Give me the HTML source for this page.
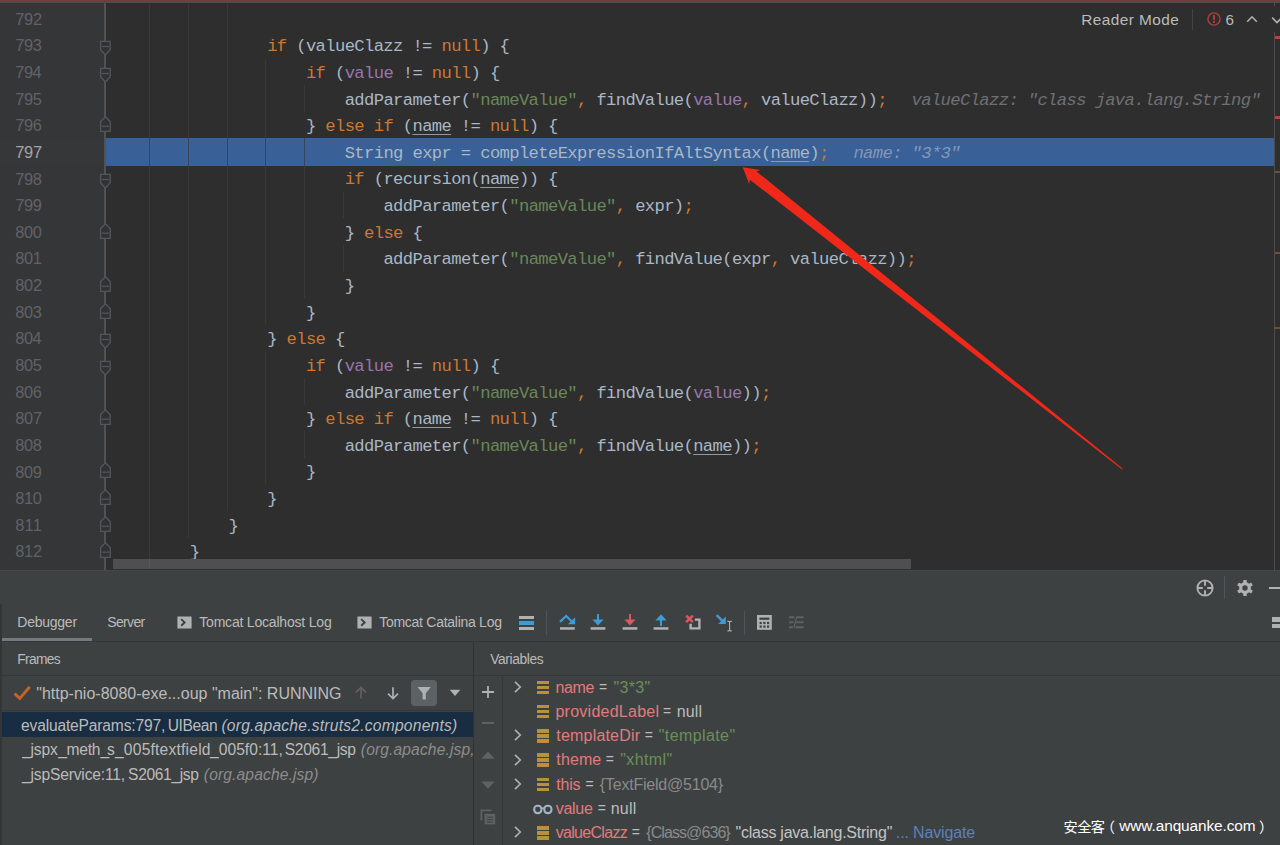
<!DOCTYPE html>
<html lang="en"><head><meta charset="utf-8"><title>UIBean.java - Debugger</title>
<style>
html,body{margin:0;padding:0;}
body{width:1280px;height:845px;overflow:hidden;position:relative;background:#2e2e2e;font-family:"Liberation Sans","Noto Sans CJK SC",sans-serif;}
#ed{position:absolute;left:0;top:0;width:1280px;height:570px;overflow:hidden;background:#2e2e2e;}
#gut{position:absolute;left:0;top:0;width:105px;height:570px;background:#353638;}
.ln,.cl,.hn{position:absolute;font-family:"Liberation Mono","DejaVu Sans Mono",monospace;line-height:40px;height:40px;white-space:pre;}
.cl,.hn{font-size:17.2px;letter-spacing:-0.6342px;}
.cl{color:#a9b7c6;}
.k{color:#cc7832;}
.s{color:#6a8759;}
.f{color:#9876aa;}
.u{text-decoration:underline;text-decoration-thickness:1px;text-underline-offset:2.6px;text-decoration-color:#8f9aa7;}
.hn{color:#6e7073;font-style:italic;}
.g{position:absolute;width:1px;background:#393939;}
.ab{position:absolute;}
#pn{position:absolute;left:0;top:570px;width:1280px;height:275px;background:#3e4142;}
.tx{position:absolute;white-space:pre;line-height:40px;height:40px;color:#bbbbbb;font-family:"Liberation Sans","Noto Sans CJK SC",sans-serif;}
</style></head><body>
<div id="ed">
<div id="gut"></div>
<div class="ab" style="left:0.00px;top:138.00px;width:105.00px;height:27.50px;background:#363739;"></div>
<div class="ab" style="left:105.00px;top:138.00px;width:1169.60px;height:27.50px;background:#396097;"></div>
<div class="ab" style="left:104.20px;top:3.00px;width:1.50px;height:567.00px;background:#505355;"></div>
<div class="g" style="left:149px;top:3.00px;height:561.62px"></div>
<div class="g" style="left:188px;top:3.00px;height:534.99px"></div>
<div class="g" style="left:227px;top:3.00px;height:508.35px"></div>
<div class="g" style="left:265px;top:58.64px;height:266.30px"></div>
<div class="g" style="left:265px;top:351.57px;height:133.15px"></div>
<div class="g" style="left:304px;top:85.28px;height:26.63px"></div>
<div class="g" style="left:304px;top:138.53px;height:159.78px"></div>
<div class="g" style="left:304px;top:378.20px;height:26.63px"></div>
<div class="g" style="left:304px;top:431.46px;height:26.63px"></div>
<div class="g" style="left:343px;top:191.79px;height:26.63px"></div>
<div class="g" style="left:343px;top:245.06px;height:26.63px"></div>
<div class="ab" style="left:148.80px;top:138.00px;width:1.40px;height:27.50px;background:#35455f;"></div>
<div class="ab" style="left:187.80px;top:138.00px;width:1.40px;height:27.50px;background:#35455f;"></div>
<div class="ab" style="left:226.80px;top:138.00px;width:1.40px;height:27.50px;background:#35455f;"></div>
<div class="ab" style="left:264.80px;top:138.00px;width:1.40px;height:27.50px;background:#35455f;"></div>
<div class="ab" style="left:303.80px;top:138.00px;width:1.40px;height:27.50px;background:#35455f;"></div>
<svg class="ab" style="left:98.00px;top:39.33px" width="14" height="18" viewBox="0 0 14 18"><path d="M2.6 2.4H12.2V10.8L7.4 16L2.6 10.8Z" fill="#313233" stroke="#54575a" stroke-width="1.3" stroke-linejoin="miter"/><path d="M3.8 7.5H11" stroke="#54575a" stroke-width="1.2"/></svg>
<svg class="ab" style="left:98.00px;top:65.96px" width="14" height="18" viewBox="0 0 14 18"><path d="M2.6 2.4H12.2V10.8L7.4 16L2.6 10.8Z" fill="#313233" stroke="#54575a" stroke-width="1.3" stroke-linejoin="miter"/><path d="M3.8 7.5H11" stroke="#54575a" stroke-width="1.2"/></svg>
<svg class="ab" style="left:98.00px;top:115.22px" width="14" height="18" viewBox="0 0 14 18"><path d="M7.4 1.8L12.2 6.5V16.3H2.6V6.5Z" fill="#313233" stroke="#54575a" stroke-width="1.3" stroke-linejoin="miter"/><path d="M3.8 11.2H11" stroke="#54575a" stroke-width="1.2"/></svg>
<svg class="ab" style="left:98.00px;top:172.48px" width="14" height="18" viewBox="0 0 14 18"><path d="M2.6 2.4H12.2V10.8L7.4 16L2.6 10.8Z" fill="#313233" stroke="#54575a" stroke-width="1.3" stroke-linejoin="miter"/><path d="M3.8 7.5H11" stroke="#54575a" stroke-width="1.2"/></svg>
<svg class="ab" style="left:98.00px;top:221.74px" width="14" height="18" viewBox="0 0 14 18"><path d="M7.4 1.8L12.2 6.5V16.3H2.6V6.5Z" fill="#313233" stroke="#54575a" stroke-width="1.3" stroke-linejoin="miter"/><path d="M3.8 11.2H11" stroke="#54575a" stroke-width="1.2"/></svg>
<svg class="ab" style="left:98.00px;top:275.00px" width="14" height="18" viewBox="0 0 14 18"><path d="M7.4 1.8L12.2 6.5V16.3H2.6V6.5Z" fill="#313233" stroke="#54575a" stroke-width="1.3" stroke-linejoin="miter"/><path d="M3.8 11.2H11" stroke="#54575a" stroke-width="1.2"/></svg>
<svg class="ab" style="left:98.00px;top:301.63px" width="14" height="18" viewBox="0 0 14 18"><path d="M7.4 1.8L12.2 6.5V16.3H2.6V6.5Z" fill="#313233" stroke="#54575a" stroke-width="1.3" stroke-linejoin="miter"/><path d="M3.8 11.2H11" stroke="#54575a" stroke-width="1.2"/></svg>
<svg class="ab" style="left:98.00px;top:332.26px" width="14" height="18" viewBox="0 0 14 18"><path d="M2.6 2.4H12.2V10.8L7.4 16L2.6 10.8Z" fill="#313233" stroke="#54575a" stroke-width="1.3" stroke-linejoin="miter"/><path d="M3.8 7.5H11" stroke="#54575a" stroke-width="1.2"/></svg>
<svg class="ab" style="left:98.00px;top:358.89px" width="14" height="18" viewBox="0 0 14 18"><path d="M2.6 2.4H12.2V10.8L7.4 16L2.6 10.8Z" fill="#313233" stroke="#54575a" stroke-width="1.3" stroke-linejoin="miter"/><path d="M3.8 7.5H11" stroke="#54575a" stroke-width="1.2"/></svg>
<svg class="ab" style="left:98.00px;top:408.15px" width="14" height="18" viewBox="0 0 14 18"><path d="M7.4 1.8L12.2 6.5V16.3H2.6V6.5Z" fill="#313233" stroke="#54575a" stroke-width="1.3" stroke-linejoin="miter"/><path d="M3.8 11.2H11" stroke="#54575a" stroke-width="1.2"/></svg>
<svg class="ab" style="left:98.00px;top:461.41px" width="14" height="18" viewBox="0 0 14 18"><path d="M7.4 1.8L12.2 6.5V16.3H2.6V6.5Z" fill="#313233" stroke="#54575a" stroke-width="1.3" stroke-linejoin="miter"/><path d="M3.8 11.2H11" stroke="#54575a" stroke-width="1.2"/></svg>
<svg class="ab" style="left:98.00px;top:488.04px" width="14" height="18" viewBox="0 0 14 18"><path d="M7.4 1.8L12.2 6.5V16.3H2.6V6.5Z" fill="#313233" stroke="#54575a" stroke-width="1.3" stroke-linejoin="miter"/><path d="M3.8 11.2H11" stroke="#54575a" stroke-width="1.2"/></svg>
<svg class="ab" style="left:98.00px;top:514.67px" width="14" height="18" viewBox="0 0 14 18"><path d="M7.4 1.8L12.2 6.5V16.3H2.6V6.5Z" fill="#313233" stroke="#54575a" stroke-width="1.3" stroke-linejoin="miter"/><path d="M3.8 11.2H11" stroke="#54575a" stroke-width="1.2"/></svg>
<svg class="ab" style="left:98.00px;top:541.30px" width="14" height="18" viewBox="0 0 14 18"><path d="M7.4 1.8L12.2 6.5V16.3H2.6V6.5Z" fill="#313233" stroke="#54575a" stroke-width="1.3" stroke-linejoin="miter"/><path d="M3.8 11.2H11" stroke="#54575a" stroke-width="1.2"/></svg>
<div class="tx" style="left:15.15px;top:-1.00px;font-size:16.4px;letter-spacing:-0.213px;color:#606366;">792</div>
<div class="tx" style="left:15.15px;top:25.00px;font-size:16.4px;letter-spacing:-0.319px;color:#606366;">793</div>
<div class="cl" style="left:267.20px;top:27.00px"><span class="k">if</span> (valueClazz != <span class="k">null</span>) {</div>
<div class="tx" style="left:15.15px;top:52.00px;font-size:16.4px;letter-spacing:-0.377px;color:#606366;">794</div>
<div class="cl" style="left:305.95px;top:54.00px"><span class="k">if</span> (<span class="f">value</span> != <span class="k">null</span>) {</div>
<div class="tx" style="left:15.15px;top:79.00px;font-size:16.4px;letter-spacing:-0.280px;color:#606366;">795</div>
<div class="cl" style="left:344.70px;top:81.00px">addParameter(<span class="s">"nameValue"</span><span class="k">,</span> findValue(<span class="f">value</span><span class="k">,</span> valueClazz))<span class="k">;</span></div>
<div class="hn" style="left:911.58px;top:81.00px">valueClazz: "class java.lang.String"</div>
<div class="tx" style="left:15.15px;top:105.00px;font-size:16.4px;letter-spacing:-0.319px;color:#606366;">796</div>
<div class="cl" style="left:305.95px;top:107.00px">} <span class="k">else if</span> (<span class="u">name</span> != <span class="k">null</span>) {</div>
<div class="tx" style="left:15.15px;top:132.00px;font-size:16.4px;letter-spacing:-0.213px;color:#a4a3a3;">797</div>
<div class="cl" style="left:344.70px;top:134.00px">String expr = completeExpressionIfAltSyntax(<span class="u">name</span>)<span class="k">;</span></div>
<div class="hn" style="left:853.45px;top:134.00px;color:#8596b6">name: "3*3"</div>
<div class="tx" style="left:15.15px;top:159.00px;font-size:16.4px;letter-spacing:-0.249px;color:#606366;">798</div>
<div class="cl" style="left:344.70px;top:160.00px"><span class="k">if</span> (recursion(<span class="u">name</span>)) {</div>
<div class="tx" style="left:15.15px;top:185.00px;font-size:16.4px;letter-spacing:-0.287px;color:#606366;">799</div>
<div class="cl" style="left:383.45px;top:187.00px">addParameter(<span class="s">"nameValue"</span><span class="k">,</span> expr)<span class="k">;</span></div>
<div class="tx" style="left:15.21px;top:212.00px;font-size:16.4px;letter-spacing:-0.392px;color:#606366;">800</div>
<div class="cl" style="left:344.70px;top:214.00px">} <span class="k">else</span> {</div>
<div class="tx" style="left:15.21px;top:238.00px;font-size:16.4px;letter-spacing:-0.286px;color:#606366;">801</div>
<div class="cl" style="left:383.45px;top:240.00px">addParameter(<span class="s">"nameValue"</span><span class="k">,</span> findValue(expr<span class="k">,</span> valueClazz))<span class="k">;</span></div>
<div class="tx" style="left:15.21px;top:265.00px;font-size:16.4px;letter-spacing:-0.261px;color:#606366;">802</div>
<div class="cl" style="left:344.70px;top:267.00px">}</div>
<div class="tx" style="left:15.21px;top:292.00px;font-size:16.4px;letter-spacing:-0.359px;color:#606366;">803</div>
<div class="cl" style="left:305.95px;top:294.00px">}</div>
<div class="tx" style="left:15.21px;top:318.00px;font-size:16.4px;letter-spacing:-0.420px;color:#606366;">804</div>
<div class="cl" style="left:267.20px;top:320.00px">} <span class="k">else</span> {</div>
<div class="tx" style="left:15.21px;top:345.00px;font-size:16.4px;letter-spacing:-0.328px;color:#606366;">805</div>
<div class="cl" style="left:305.95px;top:347.00px"><span class="k">if</span> (<span class="f">value</span> != <span class="k">null</span>) {</div>
<div class="tx" style="left:15.21px;top:372.00px;font-size:16.4px;letter-spacing:-0.359px;color:#606366;">806</div>
<div class="cl" style="left:344.70px;top:374.00px">addParameter(<span class="s">"nameValue"</span><span class="k">,</span> findValue(<span class="f">value</span>))<span class="k">;</span></div>
<div class="tx" style="left:15.21px;top:398.00px;font-size:16.4px;letter-spacing:-0.261px;color:#606366;">807</div>
<div class="cl" style="left:305.95px;top:400.00px">} <span class="k">else if</span> (<span class="u">name</span> != <span class="k">null</span>) {</div>
<div class="tx" style="left:15.21px;top:425.00px;font-size:16.4px;letter-spacing:-0.284px;color:#606366;">808</div>
<div class="cl" style="left:344.70px;top:427.00px">addParameter(<span class="s">"nameValue"</span><span class="k">,</span> findValue(<span class="u">name</span>))<span class="k">;</span></div>
<div class="tx" style="left:15.21px;top:452.00px;font-size:16.4px;letter-spacing:-0.331px;color:#606366;">809</div>
<div class="cl" style="left:305.95px;top:453.00px">}</div>
<div class="tx" style="left:15.21px;top:478.00px;font-size:16.4px;letter-spacing:-0.392px;color:#606366;">810</div>
<div class="cl" style="left:267.20px;top:480.00px">}</div>
<div class="tx" style="left:15.21px;top:505.00px;font-size:16.4px;letter-spacing:0.295px;color:#606366;">811</div>
<div class="cl" style="left:228.45px;top:507.00px">}</div>
<div class="tx" style="left:15.21px;top:531.00px;font-size:16.4px;letter-spacing:-0.261px;color:#606366;">812</div>
<div class="cl" style="left:189.70px;top:533.00px">}</div>
<div class="ab" style="left:113.00px;top:559.40px;width:798.00px;height:9.70px;background:#4f4f4f;"></div>
<div class="ab" style="left:149.00px;top:559.40px;width:1.00px;height:9.70px;background:#575757;"></div>
<div class="ab" style="left:0.00px;top:0.00px;width:1280.00px;height:2.20px;background:#713e3d;"></div>
<div class="ab" style="left:0.00px;top:2.20px;width:1280.00px;height:1.00px;background:#4c4c4c;"></div>
<div class="ab" style="left:1274.20px;top:32.00px;width:1.00px;height:538.00px;background:#4c4c4c;"></div>
<div class="ab" style="left:1274.20px;top:3.00px;width:1.00px;height:3.00px;background:#4c4c4c;"></div>
<div class="ab" style="left:1275.00px;top:35.90px;width:5.00px;height:3.00px;background:#bc3f3c;"></div>
<div class="ab" style="left:1275.00px;top:116.40px;width:5.00px;height:3.00px;background:#bc3f3c;"></div>
<div class="ab" style="left:1275.00px;top:171.00px;width:5.00px;height:2.40px;background:#6e4f3d;"></div>
<div class="ab" style="left:1275.00px;top:251.50px;width:5.00px;height:2.40px;background:#6e4f3d;"></div>
<div class="ab" style="left:1275.00px;top:326.80px;width:5.00px;height:2.40px;background:#6e4f3d;"></div>
<div class="tx" style="left:1081.23px;top:0.00px;font-size:15.4px;letter-spacing:0.443px;color:#bbbbbb;">Reader Mode</div>
<div class="ab" style="left:1192.00px;top:9.00px;width:1.00px;height:21.00px;background:#434343;"></div>
<svg class="ab" style="left:1206.20px;top:11.40px" width="16" height="16" viewBox="0 0 16 16"><circle cx="8" cy="8" r="6.1" fill="none" stroke="#b03e3c" stroke-width="1.4"/><rect x="7" y="4.1" width="2" height="4.7" fill="#b03e3c"/><rect x="7" y="9.9" width="2" height="2" fill="#b03e3c"/></svg>
<div class="tx" style="left:1225.38px;top:0.00px;font-size:15.2px;letter-spacing:0.000px;color:#bbbbbb;">6</div>
<svg class="ab" style="left:1245.00px;top:13.00px" width="14" height="12" viewBox="0 0 14 12"><path d="M2.2 8.8L7 3.8L11.8 8.8" fill="none" stroke="#afb1b3" stroke-width="1.6"/></svg>
<svg class="ab" style="left:1270.20px;top:14.20px" width="14" height="12" viewBox="0 0 14 12"><path d="M2.2 3.6L7 8.6L11.8 3.6" fill="none" stroke="#afb1b3" stroke-width="1.6"/></svg>
</div>
<svg class="ab" style="left:0.00px;top:0.00px" width="1280" height="570" viewBox="0 0 1280 570"><polygon points="742.7,167.2 760.3,170.0 756.5,171.4 1122.6,468.6 1122.0,469.4 749.9,179.7 749.2,183.9" fill="#f0281a"/></svg>
<div id="pn"></div>
<div class="ab" style="left:0.00px;top:570.00px;width:1280.00px;height:1.00px;background:#454748;"></div>
<div class="ab" style="left:0.00px;top:604.00px;width:2.00px;height:241.00px;background:#333537;"></div>
<svg class="ab" style="left:1194.70px;top:577.50px" width="20" height="20" viewBox="0 0 20 20"><circle cx="10" cy="10" r="7.6" fill="none" stroke="#afb1b3" stroke-width="1.9"/><path d="M10 2.4V7.8M10 12.2V17.6M2.4 10H7.8M12.2 10H17.6" stroke="#afb1b3" stroke-width="1.9"/></svg>
<div class="ab" style="left:1224.00px;top:576.00px;width:1.00px;height:23.00px;background:#515456;"></div>
<svg class="ab" style="left:1235.10px;top:577.50px" width="20" height="20" viewBox="0 0 20 20"><rect x="8.3" y="1.9" width="3.4" height="4" rx="0.6" fill="#afb1b3" transform="rotate(0 10 10)"/><rect x="8.3" y="1.9" width="3.4" height="4" rx="0.6" fill="#afb1b3" transform="rotate(60 10 10)"/><rect x="8.3" y="1.9" width="3.4" height="4" rx="0.6" fill="#afb1b3" transform="rotate(120 10 10)"/><rect x="8.3" y="1.9" width="3.4" height="4" rx="0.6" fill="#afb1b3" transform="rotate(180 10 10)"/><rect x="8.3" y="1.9" width="3.4" height="4" rx="0.6" fill="#afb1b3" transform="rotate(240 10 10)"/><rect x="8.3" y="1.9" width="3.4" height="4" rx="0.6" fill="#afb1b3" transform="rotate(300 10 10)"/><circle cx="10" cy="10" r="4.3" fill="none" stroke="#afb1b3" stroke-width="3.2"/></svg>
<div class="ab" style="left:1268.70px;top:586.60px;width:12.00px;height:2.00px;background:#afb1b3;"></div>
<div class="ab" style="left:1271.60px;top:616.50px;width:9.00px;height:5.00px;background:#afb1b3;"></div>
<div class="ab" style="left:1271.60px;top:624.00px;width:9.00px;height:4.40px;background:#afb1b3;"></div>
<div class="tx" style="left:17.33px;top:602.00px;font-size:14px;letter-spacing:-0.254px;color:#bbbbbb;">Debugger</div>
<div class="ab" style="left:2.00px;top:638.30px;width:90.00px;height:3.70px;background:#747a80;"></div>
<div class="tx" style="left:107.31px;top:602.00px;font-size:14px;letter-spacing:-0.658px;color:#bbbbbb;">Server</div>
<svg class="ab" style="left:177.40px;top:616.30px" width="15" height="13" viewBox="0 0 15 13"><rect x="0.4" y="0.4" width="14.2" height="12" rx="0.5" fill="#afb1b3"/><path d="M4.2 3.1L7.6 6.4L4.2 9.7" fill="none" stroke="#3e4142" stroke-width="1.9"/></svg>
<div class="tx" style="left:199.26px;top:602.00px;font-size:14px;letter-spacing:-0.199px;color:#bbbbbb;">Tomcat Localhost Log</div>
<svg class="ab" style="left:357.40px;top:616.30px" width="15" height="13" viewBox="0 0 15 13"><rect x="0.4" y="0.4" width="14.2" height="12" rx="0.5" fill="#afb1b3"/><path d="M4.2 3.1L7.6 6.4L4.2 9.7" fill="none" stroke="#3e4142" stroke-width="1.9"/></svg>
<div class="tx" style="left:379.26px;top:602.00px;font-size:14px;letter-spacing:-0.275px;color:#bbbbbb;">Tomcat Catalina Log</div>
<div class="ab" style="left:519.10px;top:616.20px;width:15.00px;height:2.40px;background:#afb1b3;"></div>
<div class="ab" style="left:519.10px;top:621.30px;width:15.00px;height:3.60px;background:#3e9bd6;"></div>
<div class="ab" style="left:519.10px;top:627.20px;width:15.00px;height:2.40px;background:#afb1b3;"></div>
<div class="ab" style="left:546.00px;top:611.00px;width:1.00px;height:24.00px;background:#515456;"></div>
<svg class="ab" style="left:557.00px;top:612.00px" width="20" height="20" viewBox="0 0 20 20"><path d="M3 9.9L9.2 4L14.6 9.2" fill="none" stroke="#3e9bd6" stroke-width="2.2"/><path d="M10.8 12.2H18.2V5.2Z" fill="#3e9bd6"/><rect x="3" y="15.2" width="14.8" height="2.5" fill="#afb1b3"/></svg>
<svg class="ab" style="left:588.10px;top:612.30px" width="20" height="20" viewBox="0 0 20 20"><rect x="9" y="2" width="2" height="7" fill="#3e9bd6"/><path d="M4.4 7.6H15.6L10 13.6Z" fill="#3e9bd6"/><rect x="2.6" y="15.2" width="14.8" height="2.5" fill="#afb1b3"/></svg>
<svg class="ab" style="left:619.90px;top:612.30px" width="20" height="20" viewBox="0 0 20 20"><rect x="9" y="2" width="2" height="7" fill="#db5860"/><path d="M4.4 7.6H15.6L10 13.6Z" fill="#db5860"/><rect x="2.6" y="15.2" width="14.8" height="2.5" fill="#afb1b3"/></svg>
<svg class="ab" style="left:650.90px;top:612.20px" width="20" height="20" viewBox="0 0 20 20"><rect x="9" y="7" width="2" height="7" fill="#3e9bd6"/><path d="M4.4 8.4H15.6L10 2.3Z" fill="#3e9bd6"/><rect x="2.6" y="15.2" width="14.8" height="2.5" fill="#afb1b3"/></svg>
<svg class="ab" style="left:684.00px;top:613.00px" width="20" height="20" viewBox="0 0 20 20"><path d="M10.8 6.6H15.4V15.4H6.6V10.8" fill="none" stroke="#afb1b3" stroke-width="2.4"/><path d="M2.2 2.6L8.8 9.2M8.8 2.6L2.2 9.2" stroke="#db5860" stroke-width="2.4"/></svg>
<svg class="ab" style="left:714.00px;top:613.00px" width="22" height="20" viewBox="0 0 22 20"><path d="M2.6 2.2L9 8.4" stroke="#3e9bd6" stroke-width="2.4"/><path d="M11.8 3.6V11H4.2Z" fill="#3e9bd6"/><path d="M15.6 8.6V17.6M13.4 8.4Q15.6 8.2 15.6 9.4Q15.6 8.2 17.8 8.4M13.4 17.8Q15.6 18 15.6 16.8Q15.6 18 17.8 17.8" fill="none" stroke="#afb1b3" stroke-width="1.1"/></svg>
<div class="ab" style="left:744.00px;top:611.00px;width:1.00px;height:24.00px;background:#515456;"></div>
<svg class="ab" style="left:756.50px;top:615.00px" width="15" height="15" viewBox="0 0 15 15"><rect x="0" y="0" width="14.8" height="14.8" fill="#afb1b3"/><rect x="2.4" y="2.6" width="10" height="2.2" fill="#3e4142"/><rect x="2.6" y="6.9" width="2.2" height="2.2" fill="#3e4142"/><rect x="6.3" y="6.9" width="2.2" height="2.2" fill="#3e4142"/><rect x="10.0" y="6.9" width="2.2" height="2.2" fill="#3e4142"/><rect x="2.6" y="10.5" width="2.2" height="2.2" fill="#3e4142"/><rect x="6.3" y="10.5" width="2.2" height="2.2" fill="#3e4142"/><rect x="10.0" y="10.5" width="2.2" height="2.2" fill="#3e4142"/></svg>
<svg class="ab" style="left:788.50px;top:616.00px" width="15" height="13" viewBox="0 0 15 13"><path d="M0 1.3H5.5M8 1.3H14.6M0 6.3H4.6M7.2 6.3H14.6M0 11.3H3.8M6.4 11.3H14.6" stroke="#5f6163" stroke-width="1.9"/><path d="M7.8 0.6L4.8 12" stroke="#5f6163" stroke-width="1.2"/></svg>
<div class="ab" style="left:2.00px;top:641.00px;width:1278.00px;height:1.00px;background:#343637;"></div>
<div class="tx" style="left:17.33px;top:640.00px;font-size:13.8px;letter-spacing:-0.709px;color:#bbbbbb;">Frames</div>
<div class="tx" style="left:490.22px;top:640.00px;font-size:13.8px;letter-spacing:-0.387px;color:#bbbbbb;">Variables</div>
<div class="ab" style="left:2.00px;top:674.60px;width:1278.00px;height:1.00px;background:#343637;"></div>
<div class="ab" style="left:472.80px;top:642.00px;width:1.40px;height:203.00px;background:#303234;"></div>
<svg class="ab" style="left:12.00px;top:683.00px" width="22" height="20" viewBox="0 0 22 20"><path d="M2.6 10.6L7.8 15.4L17.8 3.8" fill="none" stroke="#c5622a" stroke-width="2.9"/></svg>
<div class="tx" style="left:36.23px;top:674.00px;font-size:16px;letter-spacing:0.004px;color:#bbbbbb;">"http-nio-8080-exe...oup "main": RUNNING</div>
<svg class="ab" style="left:353.20px;top:685.00px" width="16" height="16" viewBox="0 0 16 16"><path d="M8 2.2V13.6" stroke="#5f6163" stroke-width="1.7"/><path d="M3 7.4L8 2.4L13 7.4" fill="none" stroke="#5f6163" stroke-width="1.7"/></svg>
<svg class="ab" style="left:385.00px;top:685.00px" width="16" height="16" viewBox="0 0 16 16"><path d="M8 2.2V13.6" stroke="#afb1b3" stroke-width="1.7"/><path d="M3 8.6L8 13.6L13 8.6" fill="none" stroke="#afb1b3" stroke-width="1.7"/></svg>
<div class="ab" style="left:410.70px;top:679.60px;width:26.80px;height:26.90px;background:#5c6164;border-radius:4px"></div>
<svg class="ab" style="left:417.00px;top:685.50px" width="15" height="15" viewBox="0 0 15 15"><path d="M0.6 1H13.8L8.8 7.2V13.6H5.6V7.2Z" fill="#afb1b3"/></svg>
<svg class="ab" style="left:449.00px;top:689.30px" width="12" height="8" viewBox="0 0 12 8"><path d="M0.7 0.8H11.3L6 7Z" fill="#afb1b3"/></svg>
<div class="ab" style="left:2.00px;top:709.80px;width:470.00px;height:1.00px;background:#36393b;"></div>
<div class="ab" style="left:2.00px;top:712.20px;width:470.70px;height:25.20px;background:#192d42;"></div>
<div class="tx" style="left:21.09px;top:706.00px;font-size:15.6px;"><span style="letter-spacing:-0.178px;color:#bbbbbb;">evaluateParams:797, </span><span style="letter-spacing:-0.438px;color:#bbbbbb;margin-left:-1.45px;">UIBean </span><span style="letter-spacing:0.234px;color:#bbbbbb;margin-left:0.34px;font-style:italic;">(org.apache.struts2.components)</span></div>
<div class="tx" style="left:22.00px;top:730.00px;font-size:15.6px;width:450.60px;overflow:hidden;"><span style="letter-spacing:-0.162px;color:#bbbbbb;">_jspx</span><span style="letter-spacing:-0.253px;color:#bbbbbb;margin-left:0.61px;">_meth</span><span style="letter-spacing:-1.972px;color:#bbbbbb;margin-left:0.13px;">_s</span><span style="letter-spacing:0.213px;color:#bbbbbb;margin-left:2.06px;">_005ftextfield</span><span style="letter-spacing:0.016px;color:#bbbbbb;margin-left:-0.64px;">_005f0:11, </span><span style="letter-spacing:-0.300px;color:#bbbbbb;margin-left:-2.48px;">S2061_jsp </span><span style="letter-spacing:0.127px;color:#8c8c8c;margin-left:1.08px;font-style:italic;">(org.apache.jsp,</span></div>
<div class="tx" style="left:22.00px;top:755.00px;font-size:15.6px;"><span style="letter-spacing:-0.165px;color:#bbbbbb;">_jspService:11, </span><span style="letter-spacing:-0.354px;color:#bbbbbb;margin-left:-1.07px;">S2061_jsp </span><span style="letter-spacing:0.137px;color:#8c8c8c;margin-left:1.21px;font-style:italic;">(org.apache.jsp)</span></div>
<div class="ab" style="left:502.30px;top:675.60px;width:1.00px;height:170.00px;background:#343637;"></div>
<svg class="ab" style="left:480.00px;top:684.00px" width="16" height="16" viewBox="0 0 16 16"><path d="M8 2V14M2 8H14" stroke="#afb1b3" stroke-width="1.8"/></svg>
<div class="ab" style="left:482.20px;top:721.90px;width:11.80px;height:1.80px;background:#5f6163;"></div>
<svg class="ab" style="left:481.10px;top:749.40px" width="14" height="10" viewBox="0 0 14 10"><path d="M0.4 9.8L7 2.4L13.6 9.8Z" fill="#5f6163"/></svg>
<svg class="ab" style="left:481.10px;top:781.40px" width="14" height="10" viewBox="0 0 14 10"><path d="M0.4 0.4L7 7.8L13.6 0.4Z" fill="#5f6163"/></svg>
<svg class="ab" style="left:479.50px;top:808.50px" width="17" height="17" viewBox="0 0 17 17"><path d="M1.4 11.6V1.4H11.4" fill="none" stroke="#5f6163" stroke-width="1.8"/><rect x="4.6" y="4.8" width="10.6" height="10.6" fill="#5f6163"/><path d="M6.8 8.2H13M6.8 10.6H13M6.8 13H13" stroke="#3e4142" stroke-width="1"/></svg>
<svg class="ab" style="left:511.50px;top:678.90px" width="12" height="16" viewBox="0 0 12 16"><path d="M3 2.9L8.3 8L3 13.1" fill="none" stroke="#afb1b3" stroke-width="1.6"/></svg>
<div class="ab" style="left:537.10px;top:680.70px;width:12.10px;height:3.40px;background:#b8913e;"></div>
<div class="ab" style="left:537.10px;top:685.70px;width:12.10px;height:3.40px;background:#b8913e;"></div>
<div class="ab" style="left:537.10px;top:690.70px;width:12.10px;height:3.40px;background:#b8913e;"></div>
<div class="tx" style="left:555.47px;top:668.00px;font-size:16px;"><span style="letter-spacing:-0.354px;color:#e07c7c;">name </span><span style="letter-spacing:0.000px;color:#bbbbbb;margin-left:0.91px;font-size:14px;line-height:1;vertical-align:1.00px;">= </span><span style="letter-spacing:0.370px;color:#6a8f59;margin-left:2.27px;">"3*3"</span></div>
<div class="ab" style="left:537.10px;top:704.95px;width:12.10px;height:3.40px;background:#b8913e;"></div>
<div class="ab" style="left:537.10px;top:709.95px;width:12.10px;height:3.40px;background:#b8913e;"></div>
<div class="ab" style="left:537.10px;top:714.95px;width:12.10px;height:3.40px;background:#b8913e;"></div>
<div class="tx" style="left:555.48px;top:692.00px;font-size:16px;"><span style="letter-spacing:0.250px;color:#e07c7c;">providedLabel </span><span style="letter-spacing:0.000px;color:#bbbbbb;margin-left:-0.87px;font-size:14px;line-height:1;vertical-align:1.00px;">= </span><span style="letter-spacing:0.141px;color:#bbbbbb;margin-left:1.51px;">null</span></div>
<svg class="ab" style="left:511.50px;top:727.40px" width="12" height="16" viewBox="0 0 12 16"><path d="M3 2.9L8.3 8L3 13.1" fill="none" stroke="#afb1b3" stroke-width="1.6"/></svg>
<div class="ab" style="left:537.10px;top:729.20px;width:12.10px;height:3.40px;background:#b8913e;"></div>
<div class="ab" style="left:537.10px;top:734.20px;width:12.10px;height:3.40px;background:#b8913e;"></div>
<div class="ab" style="left:537.10px;top:739.20px;width:12.10px;height:3.40px;background:#b8913e;"></div>
<div class="tx" style="left:556.33px;top:716.00px;font-size:16px;"><span style="letter-spacing:0.186px;color:#e07c7c;">templateDir </span><span style="letter-spacing:0.000px;color:#bbbbbb;margin-left:-0.13px;font-size:14px;line-height:1;vertical-align:1.00px;">= </span><span style="letter-spacing:0.405px;color:#6a8f59;margin-left:1.97px;">"template"</span></div>
<svg class="ab" style="left:511.50px;top:751.65px" width="12" height="16" viewBox="0 0 12 16"><path d="M3 2.9L8.3 8L3 13.1" fill="none" stroke="#afb1b3" stroke-width="1.6"/></svg>
<div class="ab" style="left:537.10px;top:753.45px;width:12.10px;height:3.40px;background:#b8913e;"></div>
<div class="ab" style="left:537.10px;top:758.45px;width:12.10px;height:3.40px;background:#b8913e;"></div>
<div class="ab" style="left:537.10px;top:763.45px;width:12.10px;height:3.40px;background:#b8913e;"></div>
<div class="tx" style="left:556.33px;top:740.00px;font-size:16px;"><span style="letter-spacing:0.103px;color:#e07c7c;">theme </span><span style="letter-spacing:0.000px;color:#bbbbbb;margin-left:-0.20px;font-size:14px;line-height:1;vertical-align:1.00px;">= </span><span style="letter-spacing:0.415px;color:#6a8f59;margin-left:2.37px;">"xhtml"</span></div>
<svg class="ab" style="left:511.50px;top:775.90px" width="12" height="16" viewBox="0 0 12 16"><path d="M3 2.9L8.3 8L3 13.1" fill="none" stroke="#afb1b3" stroke-width="1.6"/></svg>
<div class="ab" style="left:537.10px;top:777.70px;width:12.10px;height:3.40px;background:#b8913e;"></div>
<div class="ab" style="left:537.10px;top:782.70px;width:12.10px;height:3.40px;background:#b8913e;"></div>
<div class="ab" style="left:537.10px;top:787.70px;width:12.10px;height:3.40px;background:#b8913e;"></div>
<div class="tx" style="left:556.33px;top:765.00px;font-size:16px;"><span style="letter-spacing:-0.226px;color:#e07c7c;">this </span><span style="letter-spacing:0.000px;color:#bbbbbb;margin-left:0.83px;font-size:14px;line-height:1;vertical-align:1.00px;">= </span><span style="letter-spacing:-0.214px;color:#8a8a8a;margin-left:2.35px;">{TextField@5104}</span></div>
<svg class="ab" style="left:532.00px;top:803.45px" width="22" height="13" viewBox="0 0 22 13"><rect x="2.2" y="2.7" width="7.2" height="7.4" rx="3.3" fill="none" stroke="#a3b4c4" stroke-width="2.1"/><rect x="12.3" y="2.7" width="7.2" height="7.4" rx="3.3" fill="none" stroke="#a3b4c4" stroke-width="2.1"/><path d="M9 5.2H12.6" stroke="#a3b4c4" stroke-width="1.6"/></svg>
<div class="tx" style="left:555.73px;top:789.00px;font-size:16px;"><span style="letter-spacing:-0.275px;color:#e07c7c;">value </span><span style="letter-spacing:0.000px;color:#bbbbbb;margin-left:1.05px;font-size:14px;line-height:1;vertical-align:1.00px;">= </span><span style="letter-spacing:0.274px;color:#bbbbbb;margin-left:0.76px;">null</span></div>
<svg class="ab" style="left:511.50px;top:824.40px" width="12" height="16" viewBox="0 0 12 16"><path d="M3 2.9L8.3 8L3 13.1" fill="none" stroke="#afb1b3" stroke-width="1.6"/></svg>
<div class="ab" style="left:537.10px;top:826.20px;width:12.10px;height:3.40px;background:#b8913e;"></div>
<div class="ab" style="left:537.10px;top:831.20px;width:12.10px;height:3.40px;background:#b8913e;"></div>
<div class="ab" style="left:537.10px;top:836.20px;width:12.10px;height:3.40px;background:#b8913e;"></div>
<div class="tx" style="left:555.73px;top:813.00px;font-size:16px;"><span style="letter-spacing:-0.698px;color:#e07c7c;">valueClazz </span><span style="letter-spacing:0.000px;color:#bbbbbb;margin-left:1.12px;font-size:14px;line-height:1;vertical-align:1.00px;">= </span><span style="letter-spacing:-0.920px;color:#8a8a8a;margin-left:2.35px;">{Class@636} </span><span style="letter-spacing:-0.248px;color:#c4c4c4;margin-left:2.17px;">"class java.lang.String" </span><span style="letter-spacing:-0.148px;color:#5c82b8;margin-left:-0.43px;">... Navigate</span></div>
<div class="tx" style="left:1063.46px;top:807.00px;font-size:14.2px;"><span style="letter-spacing:-0.482px;color:#ffffff;">安全客</span><span style="letter-spacing:0.000px;color:#ffffff;margin-left:-3.85px;">（</span><span style="letter-spacing:-0.094px;color:#ffffff;margin-left:4.39px;font-size:15.4px;line-height:1;vertical-align:1.00px;">www.anquanke.com</span><span style="letter-spacing:0.000px;color:#ffffff;margin-left:3.44px;">）</span></div>
</body></html>
